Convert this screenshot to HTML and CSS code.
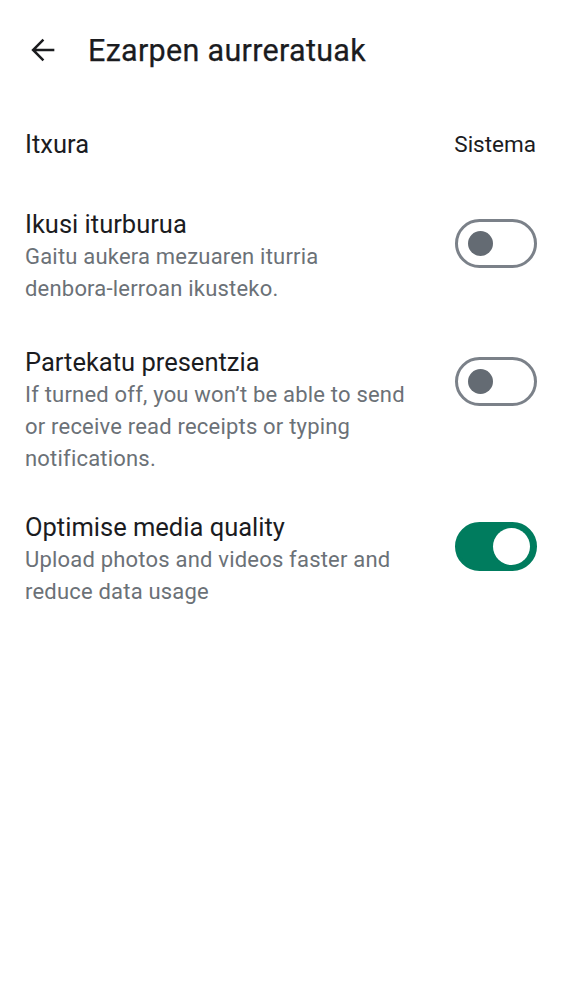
FILE: index.html
```html
<!DOCTYPE html>
<html>
<head>
<meta charset="utf-8">
<link rel="stylesheet" href="styles.css">
</head>
<body>
<header class="topbar">
  <svg class="back" viewBox="0 0 24 24" width="34" height="34"><path d="M20 12H5.5M12.3 4.7L5 12l7.3 7.3" fill="none" stroke="#1b1c1f" stroke-width="1.75"/></svg>
  <h1 class="title">Ezarpen aurreratuak</h1>
</header>
<main class="list">
  <div class="item item-simple">
    <span class="item-title">Itxura</span>
    <span class="item-value">Sistema</span>
  </div>
  <div class="item">
    <div class="text">
      <div class="item-title">Ikusi iturburua</div>
      <div class="item-sub">Gaitu aukera mezuaren iturria <span class="nowrap">denbora-lerroan</span> ikusteko.</div>
    </div>
    <div class="switch"><span class="knob"></span></div>
  </div>
  <div class="item">
    <div class="text">
      <div class="item-title">Partekatu presentzia</div>
      <div class="item-sub">If turned off, you won’t be able to send or receive read receipts or typing notifications.</div>
    </div>
    <div class="switch"><span class="knob"></span></div>
  </div>
  <div class="item item-last">
    <div class="text">
      <div class="item-title">Optimise media quality</div>
      <div class="item-sub">Upload photos and videos faster and reduce data usage</div>
    </div>
    <div class="switch on"><span class="knob"></span></div>
  </div>
</main>
</body>
</html>
```
FILE: styles.css
```css
* { box-sizing: border-box; }
html, body { margin: 0; background: #ffffff; }
body {
  font-family: Roboto, "Noto Sans", sans-serif;
  color: #1b1c1f;
  width: 562px;
}
.topbar {
  height: 100px;
  display: flex;
  align-items: center;
  padding-left: 26px;
}
.back { display: block; flex: none; }
.title {
  margin: 0 0 0 28px;
  font-size: 30.5px;
  font-weight: 400;
  letter-spacing: 0.3px;
  color: #1b1c1f;
  -webkit-text-stroke: 0.25px #1b1c1f;
}
.list { display: flex; flex-direction: column; }
.item {
  display: flex;
  align-items: flex-start;
  padding: 20px 25px 20px 25px;
}
.item-last { padding-top: 15px; }
.item-simple {
  justify-content: space-between;
  align-items: center;
  padding: 28px 26px 27px 25px;
}
.item-title {
  font-size: 25.5px;
  line-height: 34px;
  color: #1b1c1f;
}
.item-simple .item-title { line-height: 32px; }
.item-value {
  font-size: 22.5px;
  line-height: 32px;
  color: #1b1c1f;
}
.text { flex: 1; min-width: 0; padding-right: 36px; }
.item-sub {
  font-size: 22px;
  line-height: 32px;
  color: #6b7177;
  letter-spacing: 0.2px;
}
.nowrap { white-space: nowrap; }
.switch {
  flex: none;
  width: 82px;
  height: 49px;
  border-radius: 25px;
  border: 3px solid #7b8189;
  margin-top: 12px;
  display: flex;
  align-items: center;
  padding-left: 10px;
}
.knob {
  width: 25px;
  height: 25px;
  border-radius: 50%;
  background: #646b73;
}
.switch.on {
  background: #007c5e;
  border-color: #007c5e;
  justify-content: flex-end;
  padding-left: 0;
  padding-right: 4px;
}
.switch.on .knob {
  width: 37px;
  height: 37px;
  background: #ffffff;
}
```
